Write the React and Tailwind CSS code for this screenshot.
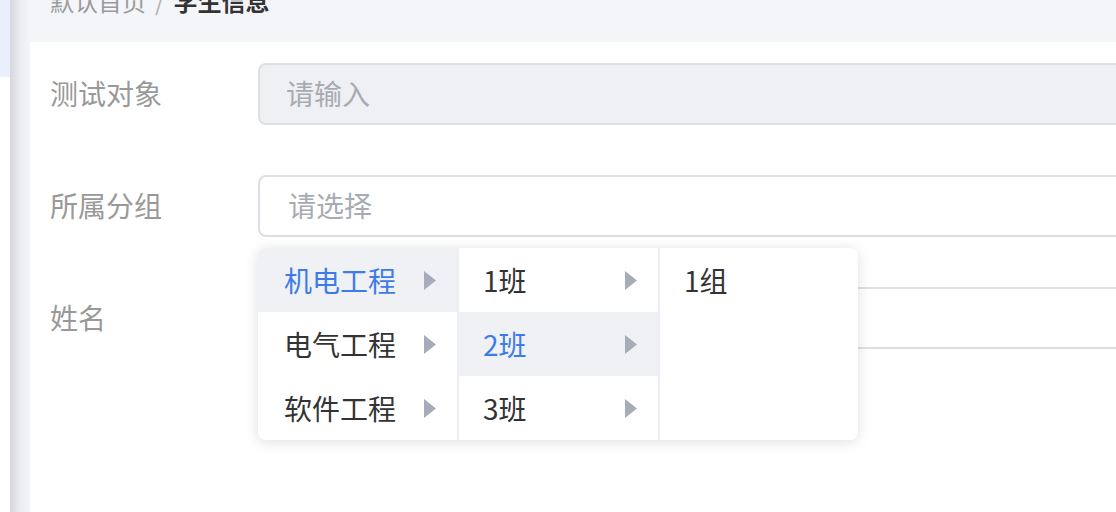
import React from 'react';

const font = { fontFamily: '"Noto Sans CJK SC", "Noto Sans", sans-serif' };

const Caret = () => (
    <svg width="12" height="19" viewBox="0 0 12 19" className="flex-shrink-0">
        <path d="M0 0 L12 9.5 L0 19 Z" fill="#a6acba" />
    </svg>
);

const columns = [
    { items: ['机电工程', '电气工程', '软件工程'], active: 0, caret: true, pad: 'pl-[26px]' },
    { items: ['1班', '2班', '3班'], active: 1, caret: true, pad: 'pl-[24px]' },
    { items: ['1组'], active: -1, caret: false, pad: 'pl-[24px]' },
];

const CascaderPanel = () => (
    <div className="absolute left-[258px] top-[248px] w-[600px] h-[192px] bg-white rounded-lg shadow-[0_2px_14px_rgba(0,0,0,0.13)] flex overflow-hidden z-10">
        {columns.map((col, ci) => (
            <div
                key={ci}
                className={ci < 2 ? 'w-[201px] h-full border-r-2 border-[#eceef3]' : 'flex-1 h-full'}
            >
                {col.items.map((item, ii) => (
                    <div
                        key={item}
                        className={
                            'h-16 flex items-center justify-between pr-[21px] text-[28px] ' + col.pad + ' ' +
                            (ii === col.active ? 'bg-[#f0f1f5] text-[#3d7ce8]' : 'text-[#333333]')
                        }
                    >
                        <span>{item}</span>
                        {col.caret && <Caret />}
                    </div>
                ))}
            </div>
        ))}
    </div>
);

const FormRow = ({ label, children }) => (
    <div className="flex items-center h-[62px]">
        <div className="w-[208px] text-[28px] text-[#999999] flex-shrink-0 -mt-[3px]">{label}</div>
        {children}
    </div>
);

export default function App() {
    return (
        <div className="w-[1116px] h-[512px] overflow-hidden flex bg-[#f4f5f9]" style={font}>
            {/* Sidebar edge */}
            <div className="w-[10px] flex flex-col flex-shrink-0 bg-white">
                <div className="h-[77px] bg-[#e9effc]"></div>
            </div>

            <div className="flex-1 flex flex-col relative">
                <div className="absolute left-0 top-0 bottom-0 w-[20px] bg-gradient-to-r from-[#d6d7dd] via-[#ebecf0] to-[#f4f5f9]"></div>

                {/* Breadcrumb */}
                <div className="h-[42px] pl-[40px] flex-shrink-0 relative">
                    <div className="-mt-[17px] text-[24px] leading-[36px] flex items-center gap-[9px]">
                        <span className="text-[#9a9a9a]">默认首页</span>
                        <span className="text-[#b0b0b0]">/</span>
                        <span className="text-[#333333] font-bold">学生信息</span>
                    </div>
                </div>

                {/* Form panel */}
                <div className="flex-1 ml-[20px] bg-white pl-[20px] pt-[21px] relative">
                    <div className="flex flex-col gap-[50px]">
                        <FormRow label="测试对象">
                            <div className="w-[900px] h-[62px] flex-shrink-0 rounded-lg border-2 border-[#dcdfe6] bg-[#eff0f4] flex items-center pl-[26px] text-[28px] text-[#a8abb2]">
                                <span className="-mt-[3px]">请输入</span>
                            </div>
                        </FormRow>
                        <FormRow label="所属分组">
                            <div className="w-[900px] h-[62px] flex-shrink-0 rounded-lg border-2 border-[#dcdfe6] bg-white flex items-center pl-[28px] text-[28px] text-[#a8abb2]">
                                <span className="-mt-[3px]">请选择</span>
                            </div>
                        </FormRow>
                        <FormRow label="姓名">
                            <div className="w-[900px] h-[62px] flex-shrink-0 rounded-lg border-2 border-[#dcdfe6] bg-white"></div>
                        </FormRow>
                    </div>
                    <div className="absolute left-[-30px] top-[-42px]">
                        <CascaderPanel />
                    </div>
                </div>
            </div>
        </div>
    );
}
